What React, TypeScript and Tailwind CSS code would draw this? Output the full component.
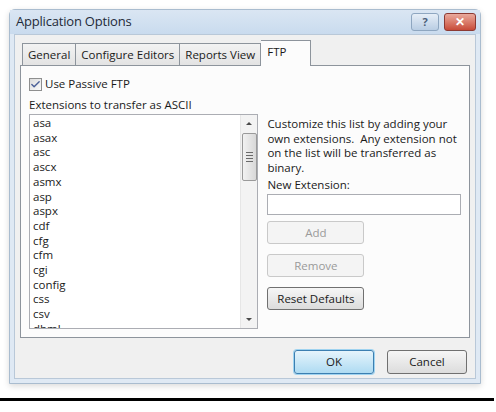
import { Check } from "lucide-react";

const extensions = [
  "asa", "asax", "asc", "ascx", "asmx", "asp", "aspx", "cdf",
  "cfg", "cfm", "cgi", "config", "css", "csv", "dbml",
];

function WinButton({ label, disabled }: { label: string; disabled?: boolean }) {
  return (
    <button
      className={
        "h-[23px] w-[97px] rounded-[3px] border text-[11.5px] " +
        (disabled
          ? "border-[#c9c9c9] bg-[#f4f4f4] text-[#9a9a9a]"
          : "border-[#707070] bg-gradient-to-b from-[#f6f6f6] to-[#dcdcdc] text-[#1a1a1a]")
      }
    >
      {label}
    </button>
  );
}

export default function App() {
  return (
    <div className="w-[496px] h-[412px] bg-white overflow-hidden" style={{ fontFamily: '"Open Sans", "Noto Sans", sans-serif' }}>
      {/* window frame */}
      <div className="ml-[9px] mt-[9px] w-[472px] h-[375px] rounded-t-[6px] border border-[#a9bccf] bg-[#dfe9f4] shadow-[0_2px_6px_rgba(0,0,0,0.15)] flex flex-col">
        {/* title bar */}
        <div className="h-[24px] flex items-center justify-between pl-[6px] pr-[4px] bg-gradient-to-b from-[#dae6f3] to-[#c9dbee]">
          <span className="text-[13px] text-[#1e2a38] tracking-[-0.2px]">Application Options</span>
          <div className="flex gap-[5px] items-center">
            <div className="w-[28px] h-[18px] rounded-[3px] border border-[#8ea6c0] bg-gradient-to-b from-[#e6eef7] to-[#b9cde3] flex items-center justify-center text-[11px] font-bold text-[#4b5f78]">?</div>
            <div className="w-[32px] h-[18px] rounded-[3px] border border-[#8c3a33] bg-gradient-to-b from-[#e9a99c] to-[#c74a38] flex items-center justify-center text-[12px] font-bold text-white">✕</div>
          </div>
        </div>
        {/* client area */}
        <div className="flex-1 mx-[4px] mb-[4px] bg-[#f0f0f0] border border-[#b9c8d8] flex flex-col px-[5px] pt-[4px]">
          {/* tabs */}
          <div className="flex items-end h-[26px] pl-[2px] text-[11.5px] text-[#1a1a1a]">
            <div className="h-[22px] px-[5px] flex items-center border border-b-0 border-[#8d949c] bg-gradient-to-b from-[#f3f3f3] to-[#e3e3e3]">General</div>
            <div className="h-[22px] px-[5px] flex items-center border border-b-0 border-l-0 border-[#8d949c] bg-gradient-to-b from-[#f3f3f3] to-[#e3e3e3]">Configure Editors</div>
            <div className="h-[22px] px-[5px] flex items-center border border-b-0 border-l-0 border-[#8d949c] bg-gradient-to-b from-[#f3f3f3] to-[#e3e3e3]">Reports View</div>
            <div className="h-[26px] w-[50px] px-[6px] pt-[2px] -mb-px relative z-10 border border-b-0 border-l-0 border-[#8d949c] bg-[#fcfcfc]">FTP</div>
          </div>
          {/* tab panel */}
          <div className="h-[273px] border border-[#8d949c] bg-[#fcfcfc] flex pl-[8px] pr-[8px] pt-[11px] text-[11.5px] text-[#1a1a1a]">
            <div className="w-[231px] flex flex-col">
              <label className="flex items-center gap-[3px] h-[14px]">
                <span className="w-[13px] h-[13px] border border-[#8e8f8f] bg-gradient-to-br from-[#dcdcdc] to-[#fafafa] flex items-center justify-center">
                  <Check size={11} strokeWidth={3} className="text-[#4a5f97]" />
                </span>
                Use Passive FTP
              </label>
              <div className="mt-[5px] leading-[17px]">Extensions to transfer as ASCII</div>
              <div className="mt-[1px] h-[215px] border border-[#abadb3] bg-white flex overflow-hidden">
                <ul className="flex-1 pl-[3px] pt-[1px] leading-[14.7px]">
                  {extensions.map((e) => (
                    <li key={e}>{e}</li>
                  ))}
                </ul>
                <div className="w-[17px] bg-[#f3f3f3] border-l border-[#e6e6e6] flex flex-col items-center">
                  <div className="h-[17px] flex items-center justify-center">
                    <div className="w-0 h-0 border-l-[3px] border-r-[3px] border-b-[3px] border-l-transparent border-r-transparent border-b-[#4a4a4a]" />
                  </div>
                  <div className="w-[15px] h-[48px] mt-[1px] rounded-[2px] border border-[#9a9a9a] bg-gradient-to-r from-[#f2f2f2] to-[#d8d8d8] flex flex-col items-center justify-center gap-[2px]">
                    <div className="w-[7px] h-px bg-[#6a6a6a]" />
                    <div className="w-[7px] h-px bg-[#6a6a6a]" />
                    <div className="w-[7px] h-px bg-[#6a6a6a]" />
                    <div className="w-[7px] h-px bg-[#6a6a6a]" />
                  </div>
                  <div className="flex-1" />
                  <div className="h-[17px] flex items-center justify-center">
                    <div className="w-0 h-0 border-l-[3px] border-r-[3px] border-t-[3px] border-l-transparent border-r-transparent border-t-[#4a4a4a]" />
                  </div>
                </div>
              </div>
            </div>
            <div className="ml-[9px] w-[195px] flex flex-col pt-[40px]">
              <p className="leading-[14.6px]">
                Customize this list by adding your own extensions.&nbsp; Any extension not on the list will be transferred as binary.
              </p>
              <div className="mt-[2px] leading-[15px]">New Extension:</div>
              <div className="mt-[2px] h-[21px] border border-[#abadb3] bg-white" />
              <div className="mt-[6px] flex flex-col gap-[10px]">
                <WinButton label="Add" disabled />
                <WinButton label="Remove" disabled />
                <WinButton label="Reset Defaults" />
              </div>
            </div>
          </div>
          {/* bottom buttons */}
          <div className="flex justify-end gap-[13px] mt-[12px] pr-[3px] text-[11.5px]">
            <button className="w-[80px] h-[24px] rounded-[3px] border border-[#3c7fb1] bg-gradient-to-b from-[#e5f4fc] to-[#aedbf2] shadow-[0_0_0_1px_#9fd3f0] text-[#1a1a1a]">OK</button>
            <button className="w-[80px] h-[24px] rounded-[3px] border border-[#707070] bg-gradient-to-b from-[#f6f6f6] to-[#dcdcdc] text-[#1a1a1a]">Cancel</button>
          </div>
        </div>
      </div>
      <div className="mt-[14px] w-[494px] h-[3px] bg-black" />
    </div>
  );
}
